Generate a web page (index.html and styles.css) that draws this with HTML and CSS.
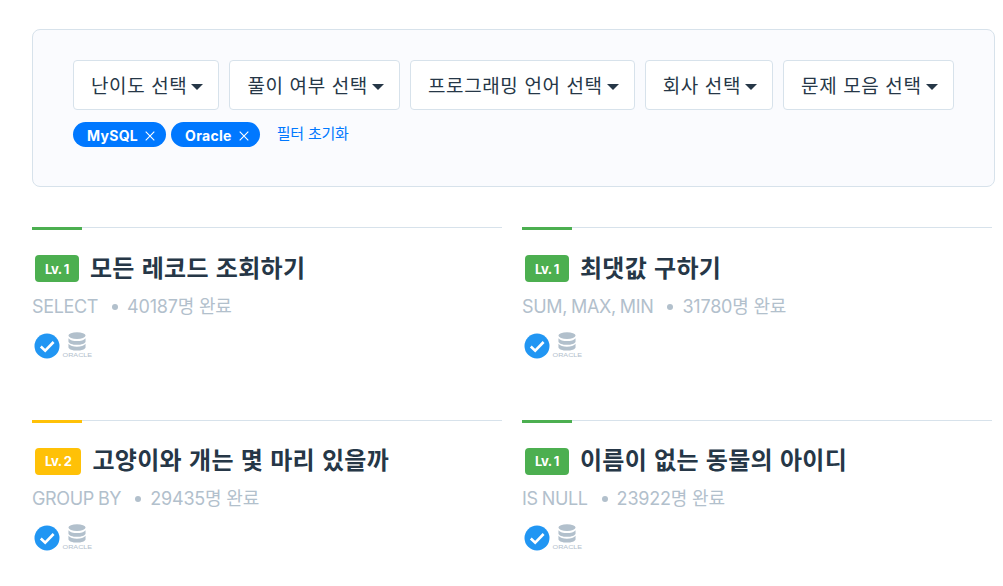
FILE: index.html
```html
<!DOCTYPE html>
<html lang="ko">
<head>
    <meta charset="UTF-8">
    <title>코딩테스트 문제</title>
    <link rel="stylesheet" href="styles.css">
</head>
<body>

<svg class="defs" width="0" height="0">
    <symbol id="icon-solved" viewBox="0 0 26 26">
        <circle cx="13" cy="13" r="12.500" fill="#2196f3"/>
        <path d="M6.800 13.500l4.400 4.200L19.600 9" fill="none" stroke="#fff" stroke-width="2.600"/>
    </symbol>
    <symbol id="icon-db" viewBox="0 0 20 19" preserveAspectRatio="none">
        <ellipse cx="10" cy="3.600" rx="9.500" ry="3.400" fill="#b2c0cc"/>
        <path d="M.5 6.200c1.600 2 5.500 2.900 9.500 2.900s7.900-.9 9.500-2.900v3.200c0 1.900-4.500 3.400-9.500 3.400s-9.500-1.500-9.500-3.400z" fill="#b2c0cc"/>
        <path d="M.5 11.800c1.600 2 5.500 2.900 9.500 2.900s7.900-.9 9.500-2.900v3.400c0 1.900-4.500 3.400-9.500 3.400s-9.500-1.500-9.500-3.400z" fill="#b2c0cc"/>
    </symbol>
    <symbol id="icon-x" viewBox="0 0 10 10">
        <path d="M.7.7l8.600 8.600M9.300.7L.7 9.300" fill="none" stroke="#fff" stroke-width="1.100"/>
    </symbol>
</svg>

<div class="filters">
    <div class="filter-buttons">
        <button class="filter-btn">난이도 선택<span class="caret"></span></button>
        <button class="filter-btn">풀이 여부 선택<span class="caret"></span></button>
        <button class="filter-btn">프로그래밍 언어 선택<span class="caret"></span></button>
        <button class="filter-btn">회사 선택<span class="caret"></span></button>
        <button class="filter-btn">문제 모음 선택<span class="caret"></span></button>
    </div>
    <div class="filter-tags">
        <span class="tag">MySQL<svg class="tag-x"><use href="#icon-x"/></svg></span>
        <span class="tag">Oracle<svg class="tag-x"><use href="#icon-x"/></svg></span>
        <a class="reset" href="#">필터 초기화</a>
    </div>
</div>

<div class="cards">
    <div class="card lv1">
        <div class="card-title"><span class="level">Lv. 1</span><h4>모든 레코드 조회하기</h4></div>
        <div class="card-info"><span class="part">SELECT</span><span class="dot"></span><span>40187명 완료</span></div>
        <div class="card-icons">
            <svg class="solved"><use href="#icon-solved"/></svg>
            <div class="oracle"><svg class="db"><use href="#icon-db"/></svg><span class="oracle-name">ORACLE</span></div>
        </div>
    </div>
    <div class="card lv1">
        <div class="card-title"><span class="level">Lv. 1</span><h4>최댓값 구하기</h4></div>
        <div class="card-info"><span class="part">SUM, MAX, MIN</span><span class="dot"></span><span>31780명 완료</span></div>
        <div class="card-icons">
            <svg class="solved"><use href="#icon-solved"/></svg>
            <div class="oracle"><svg class="db"><use href="#icon-db"/></svg><span class="oracle-name">ORACLE</span></div>
        </div>
    </div>
    <div class="card lv2">
        <div class="card-title"><span class="level">Lv. 2</span><h4>고양이와 개는 몇 마리 있을까</h4></div>
        <div class="card-info"><span class="part">GROUP BY</span><span class="dot"></span><span>29435명 완료</span></div>
        <div class="card-icons">
            <svg class="solved"><use href="#icon-solved"/></svg>
            <div class="oracle"><svg class="db"><use href="#icon-db"/></svg><span class="oracle-name">ORACLE</span></div>
        </div>
    </div>
    <div class="card lv1">
        <div class="card-title"><span class="level">Lv. 1</span><h4>이름이 없는 동물의 아이디</h4></div>
        <div class="card-info"><span class="part">IS NULL</span><span class="dot"></span><span>23922명 완료</span></div>
        <div class="card-icons">
            <svg class="solved"><use href="#icon-solved"/></svg>
            <div class="oracle"><svg class="db"><use href="#icon-db"/></svg><span class="oracle-name">ORACLE</span></div>
        </div>
    </div>
</div>

</body>
</html>
```

FILE: styles.css
```css
html, body {
    height: 586px;
    overflow: hidden;
}

body {
    margin: 0;
    padding: 29px 8px 0 32px;
    background: #fff;
    color: #263747;
    font-family: "Noto Sans CJK KR", "Liberation Sans", sans-serif;
}

.defs {
    position: absolute;
}

.filters {
    box-sizing: border-box;
    width: 963px;
    height: 158px;
    padding: 30px 40px;
    background: #fafbfe;
    border: 1px solid #d7e2eb;
    border-radius: 8px;
}

.filter-buttons {
    display: flex;
    gap: 10px;
}

.filter-btn {
    box-sizing: border-box;
    height: 50px;
    padding: 0 15px 2px 17px;
    display: flex;
    align-items: center;
    background: #fff;
    border: 1px solid #d7e2eb;
    border-radius: 4px;
    color: #263747;
    font-family: inherit;
    font-size: 19px;
    font-weight: 400;
    letter-spacing: .62px;
    white-space: nowrap;
}

.caret {
    margin-left: 4px;
    margin-top: 5px;
    border-top: 6px solid #263747;
    border-left: 6px solid transparent;
    border-right: 6px solid transparent;
}

.filter-tags {
    display: flex;
    align-items: center;
    gap: 5px;
    margin-top: 12px;
}

.tag {
    box-sizing: border-box;
    height: 25px;
    padding: 2px 11px 0 14px;
    display: flex;
    align-items: center;
    background: #0078ff;
    border-radius: 13px;
    color: #fff;
    font-family: "Inter", "Liberation Sans", sans-serif;
    font-size: 14px;
    font-weight: 700;
    letter-spacing: .3px;
}

.tag-x {
    width: 10px;
    height: 10px;
    margin-left: 7px;
}

.reset {
    margin-left: 12px;
    margin-top: -4px;
    color: #0078ff;
    font-size: 15px;
    letter-spacing: -.2px;
    text-decoration: none;
}

.cards {
    display: grid;
    grid-template-columns: 470px 470px;
    column-gap: 20px;
    margin-top: 40.4px;
}

.card {
    position: relative;
    box-sizing: border-box;
    height: 192.6px;
    border-top: 1px solid #d7e2eb;
}

/* 레벨 색 막대 */
.card::before {
    content: "";
    position: absolute;
    top: -1px;
    left: 0;
    width: 50px;
    height: 3px;
}

.lv1::before, .lv1 .level {
    background: #4caf50;
}

.lv2::before, .lv2 .level {
    background: #ffc107;
}

.card-title {
    display: flex;
    align-items: center;
    margin-top: 20.2px;
    padding-left: 3px;
}

.level {
    box-sizing: border-box;
    height: 27px;
    margin-top: 4px;
    padding: 0 10px;
    display: flex;
    align-items: center;
    border-radius: 4px;
    color: #fff;
    font-family: "Inter", sans-serif;
    font-size: 13px;
    font-weight: 700;
    letter-spacing: -.5px;
    white-space: nowrap;
}

.card-title h4 {
    margin: 0 0 0 11px;
    font-size: 24px;
    font-weight: 700;
    letter-spacing: .3px;
    line-height: 36px;
}

.card-info {
    display: flex;
    align-items: center;
    margin-top: 9px;
    color: #b2c0cc;
    font-family: "Inter", "Noto Sans CJK KR", sans-serif;
    font-size: 18px;
    letter-spacing: -.2px;
    line-height: 26px;
}

.part {
    letter-spacing: -.35px;
    word-spacing: -.7px;
}

.dot {
    width: 6px;
    height: 6px;
    margin: 0 9px 0 14px;
    border-radius: 50%;
    background: #b2c0cc;
}

.card-icons {
    display: flex;
    align-items: flex-start;
    gap: 1px;
    margin-top: 13px;
    padding-left: 2px;
}

.solved {
    width: 26px;
    height: 26px;
}

.oracle {
    display: flex;
    flex-direction: column;
    align-items: center;
    width: 32px;
    margin-top: -1px;
}

.db {
    width: 18px;
    height: 19px;
    display: block;
}

.oracle-name {
    margin-top: 1px;
    color: #b2c0cc;
    font-family: "Liberation Sans", sans-serif;
    font-size: 6px;
    line-height: 7px;
    transform: scaleX(1.2);
}
```
